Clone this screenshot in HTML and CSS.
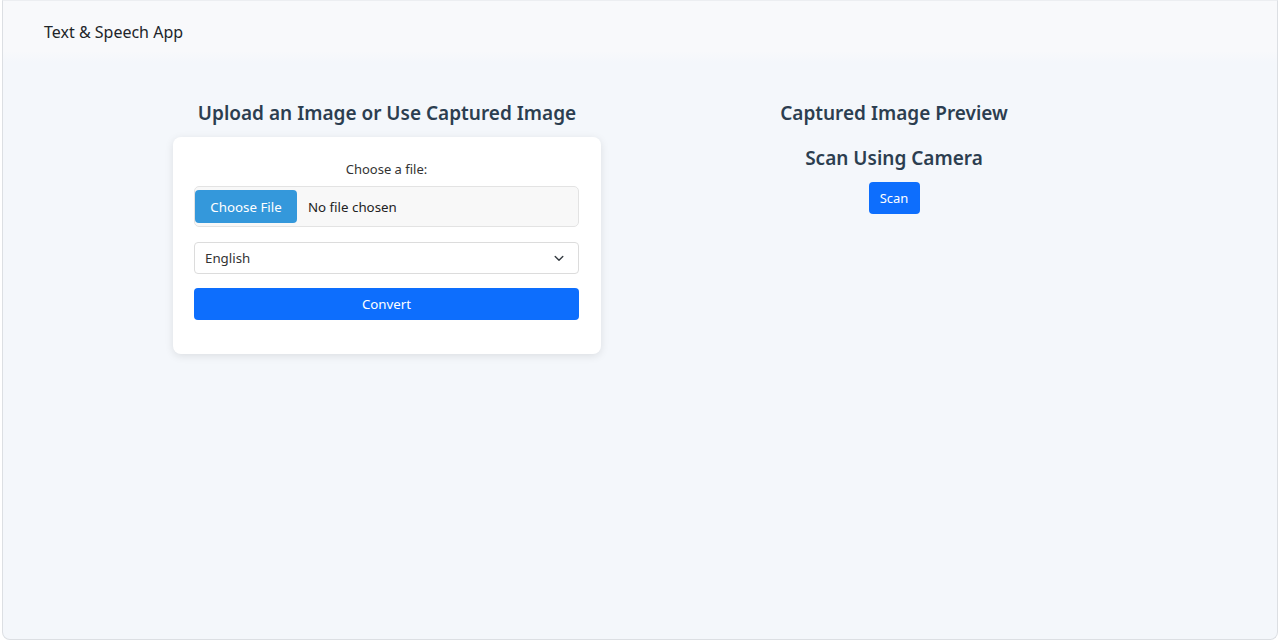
FILE: index.html
```html
<!DOCTYPE html>
<html lang="en">
<head>
<meta charset="utf-8">
<title>Text &amp; Speech App</title>
<link rel="stylesheet" href="styles.css">
</head>
<body>
<div class="frame">
  <header class="navbar">
    <span class="brand">Text &amp; Speech App</span>
  </header>
  <main class="content">
    <section class="column">
      <h2 class="heading">Upload an Image or Use Captured Image</h2>
      <div class="card">
        <label class="file-label">Choose a file:</label>
        <div class="file-input">
          <span class="file-btn">Choose File</span>
          <span class="file-name">No file chosen</span>
        </div>
        <div class="select">
          <span>English</span>
          <svg class="chev" width="10" height="7" viewBox="0 0 10 7"><path d="M1.2 1.5 L5 5.2 L8.8 1.5" fill="none" stroke="#343a40" stroke-width="1.4" stroke-linecap="round" stroke-linejoin="round"/></svg>
        </div>
        <button class="convert">Convert</button>
      </div>
    </section>
    <section class="column">
      <h2 class="heading">Captured Image Preview</h2>
      <h2 class="heading sub">Scan Using Camera</h2>
      <button class="scan">Scan</button>
    </section>
  </main>
</div>
</body>
</html>
```
FILE: styles.css
```css
* { box-sizing: border-box; }
html, body { margin: 0; padding: 0; height: 100%; background: #ffffff; }
body {
  font-family: "Noto Sans", "Open Sans", "Liberation Sans", sans-serif;
  color: #212529;
}
.frame {
  margin: 0 2px 2px 2px;
  height: 640px;
  border: 1px solid #dcdfe3;
  border-top-color: #eceef1;
  border-radius: 0 0 8px 8px;
  background: #f4f7fb;
  overflow: hidden;
  display: flex;
  flex-direction: column;
}
.navbar {
  height: 62px;
  background: linear-gradient(#f8f9fb 0%, #f8f9fb 80%, #f4f7fb 100%);
  padding: 0 0 0 41px;
  display: flex;
  align-items: center;
}
.brand {
  font-size: 16px;
  color: #212529;
}
.content {
  display: flex;
  justify-content: center;
  gap: 79px;
  padding: 36px 0 0 1px;
}
.column {
  width: 428px;
  display: flex;
  flex-direction: column;
  align-items: center;
}
.heading {
  margin: 0 0 10px 0;
  font-size: 19px;
  font-weight: 600;
  color: #2c3e50;
  line-height: 28px;
}
.heading.sub { margin-top: 7px; margin-bottom: 10px; }
.card {
  width: 428px;
  background: #ffffff;
  border-radius: 8px;
  box-shadow: 0 2px 8px rgba(0,0,0,0.1);
  padding: 20px 22px 34px 21px;
  display: flex;
  flex-direction: column;
  align-items: stretch;
}
.file-label {
  text-align: center;
  font-size: 13px;
  line-height: 24px;
  color: #333;
  margin-bottom: 5px;
}
.file-input {
  height: 41px;
  border: 1px solid #e3e3e3;
  border-radius: 5px;
  background: #f8f8f8;
  display: flex;
  align-items: center;
  padding: 3px 0;
}
.file-btn {
  height: 33px;
  width: 102px;
  background: #3498db;
  color: #ffffff;
  border-radius: 4px;
  display: flex;
  align-items: center;
  justify-content: center;
  font-size: 13.3px;
}
.file-name {
  margin-left: 11px;
  margin-top: 1px;
  font-size: 13.3px;
  color: #222;
}
.select {
  margin-top: 15px;
  height: 32px;
  border: 1px solid #dcdcdc;
  border-radius: 4px;
  background: #ffffff;
  display: flex;
  align-items: center;
  justify-content: space-between;
  padding: 0 14px 0 10px;
  font-size: 13.3px;
  color: #333;
}
.convert {
  margin-top: 14px;
  height: 32px;
  border: none;
  border-radius: 4px;
  background: #0d6efd;
  color: #ffffff;
  font-family: inherit;
  font-size: 13.3px;
}
.scan {
  height: 32px;
  width: 51px;
  border: none;
  border-radius: 4px;
  background: #0d6efd;
  color: #ffffff;
  font-family: inherit;
  font-size: 13px;
  padding: 0;
}
```
